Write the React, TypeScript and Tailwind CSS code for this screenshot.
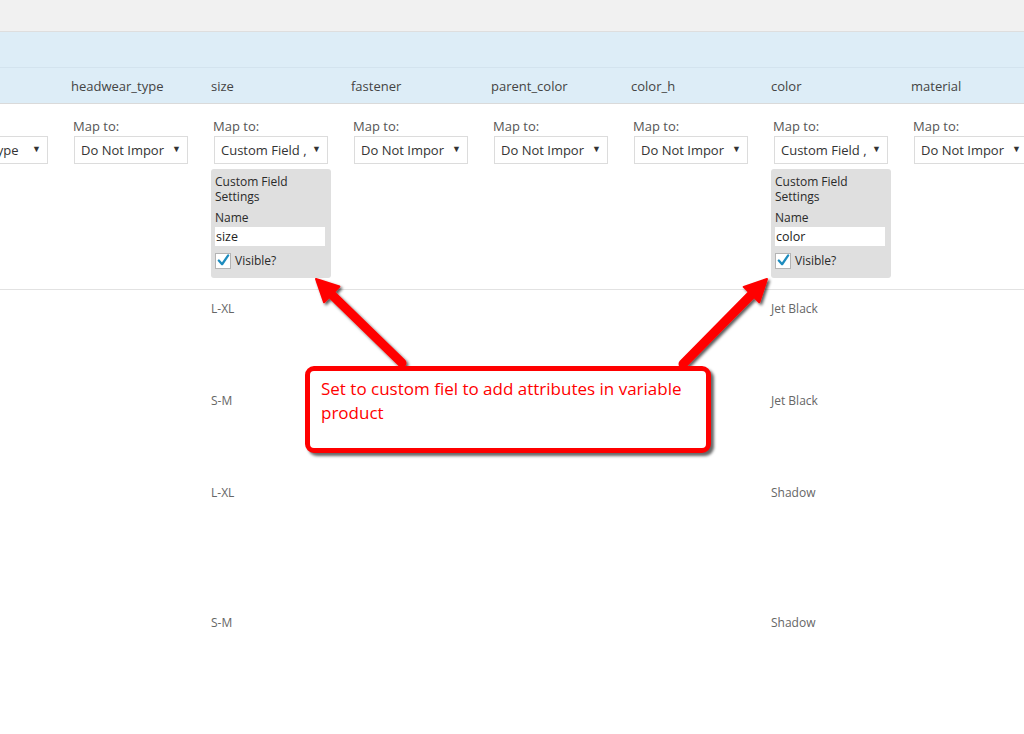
import React from "react";

type Col = {
  header: string;
  select: string;
  custom?: string;
  data?: string[];
};

const cols: Col[] = [
  { header: "", select: "Product type" },
  { header: "headwear_type", select: "Do Not Impor" },
  { header: "size", select: "Custom Field ,", custom: "size", data: ["L-XL", "S-M", "L-XL", "S-M"] },
  { header: "fastener", select: "Do Not Impor" },
  { header: "parent_color", select: "Do Not Impor" },
  { header: "color_h", select: "Do Not Impor" },
  { header: "color", select: "Custom Field ,", custom: "color", data: ["Jet Black", "Jet Black", "Shadow", "Shadow"] },
  { header: "material", select: "Do Not Impor" },
];

const rowHeights = ["h-[92px]", "h-[92px]", "h-[130px]", "h-[92px]"];

function Select({ text }: { text: string }) {
  return (
    <div className="relative h-[28px] w-[114px] border border-[#dcdcdc] bg-white">
      <div className="absolute left-[6px] top-[3px] whitespace-nowrap text-[13px] leading-[20px] text-[#333]">
        {text}
      </div>
      <div className="absolute right-[6px] top-[5px] bg-white pl-[2px] text-[9px] leading-[14px] text-[#333]">▼</div>
    </div>
  );
}

function CustomBox({ name }: { name: string }) {
  return (
    <div className="mt-[5px] ml-[-3px] w-[120px] rounded-[3px] bg-[#dfdfdf] px-[4px] pb-[9px] pt-[5px] text-[12px] text-[#2a2a2a]">
      <div className="leading-[15px]">Custom Field Settings</div>
      <div className="mt-[6px] leading-[16px]">Name</div>
      <div className="mt-[1px] mr-[2px] h-[19px] bg-white pl-[1px] text-[12.5px] leading-[19px] text-[#222]">{name}</div>
      <div className="mt-[7px] flex items-center gap-[4px]">
        <div className="relative h-[16px] w-[16px] border border-[#b4b4b4] bg-white">
          <svg viewBox="0 0 16 16" className="absolute left-[0px] top-[-1px] h-[15px] w-[15px]">
            <path d="M3 8 L6.5 12 L13 2.5" fill="none" stroke="#1e8cbe" strokeWidth="2.4" strokeLinecap="round" strokeLinejoin="round" />
          </svg>
        </div>
        <span className="leading-[16px]">Visible?</span>
      </div>
    </div>
  );
}

export default function App() {
  const font = { fontFamily: '"Open Sans", "Noto Sans", sans-serif' };
  return (
    <div className="relative h-[734px] w-[1024px] overflow-hidden bg-white" style={font}>
      <div className="h-[32px] border-b border-[#dedede] bg-[#f1f1f1]" />
      <div className="h-[36px] border-b border-[#d3e3ee] bg-[#ddedf7]" />
      <div className="ml-[-79px] flex h-[36px] border-b border-[#dadada] bg-[#ddedf7]">
        {cols.map((c, i) => (
          <div key={i} className="w-[140px] shrink-0 pl-[10px] pt-[8px] text-[13px] leading-[20px] text-[#444]">
            {c.header}
          </div>
        ))}
      </div>
      <div className="ml-[-79px] flex h-[186px] border-b border-[#e2e2e2]">
        {cols.map((c, i) => (
          <div key={i} className="w-[140px] shrink-0 pl-[13px] pt-[12px]">
            <div className="ml-[-1px] h-[20px] text-[13px] leading-[20px] text-[#555]">{i === 0 ? "" : "Map to:"}</div>
            <Select text={c.select} />
            {c.custom && <CustomBox name={c.custom} />}
          </div>
        ))}
      </div>
      {rowHeights.map((h, r) => (
        <div key={r} className={`ml-[-79px] flex ${h}`}>
          {cols.map((c, i) => (
            <div key={i} className="w-[140px] shrink-0 pl-[10px] pt-[10px] text-[12px] leading-[17px] text-[#666]">
              {c.data ? c.data[r] : ""}
            </div>
          ))}
        </div>
      ))}

      <svg className="pointer-events-none absolute left-0 top-0" width="1024" height="734" viewBox="0 0 1024 734">
        <defs>
          <filter id="sh" x="-20%" y="-20%" width="140%" height="140%">
            <feDropShadow dx="2" dy="2" stdDeviation="1.5" floodColor="#000" floodOpacity="0.65" />
          </filter>
        </defs>
        <g filter="url(#sh)" fill="#ff0000" stroke="#ff0000">
          <line x1="402" y1="363" x2="327" y2="290" strokeWidth="9" strokeLinecap="round" />
          <polygon points="316,279 339.4,286.5 324,302.3" strokeWidth="2" strokeLinejoin="round" />
          <line x1="683" y1="364" x2="757" y2="289" strokeWidth="9" strokeLinecap="round" />
          <polygon points="767,279 759.3,302.3 743.7,286.9" strokeWidth="2" strokeLinejoin="round" />
        </g>
      </svg>

      <div className="absolute left-[305px] top-[366px] h-[87px] w-[406px] rounded-[9px] border-[5px] border-[#ff0000] bg-white px-[11px] pt-[6px] text-[17px] leading-[24px] text-[#ff0000] shadow-[3px_3px_3px_rgba(0,0,0,0.6)]">
        Set to custom fiel to add attributes in variable product
      </div>
    </div>
  );
}
